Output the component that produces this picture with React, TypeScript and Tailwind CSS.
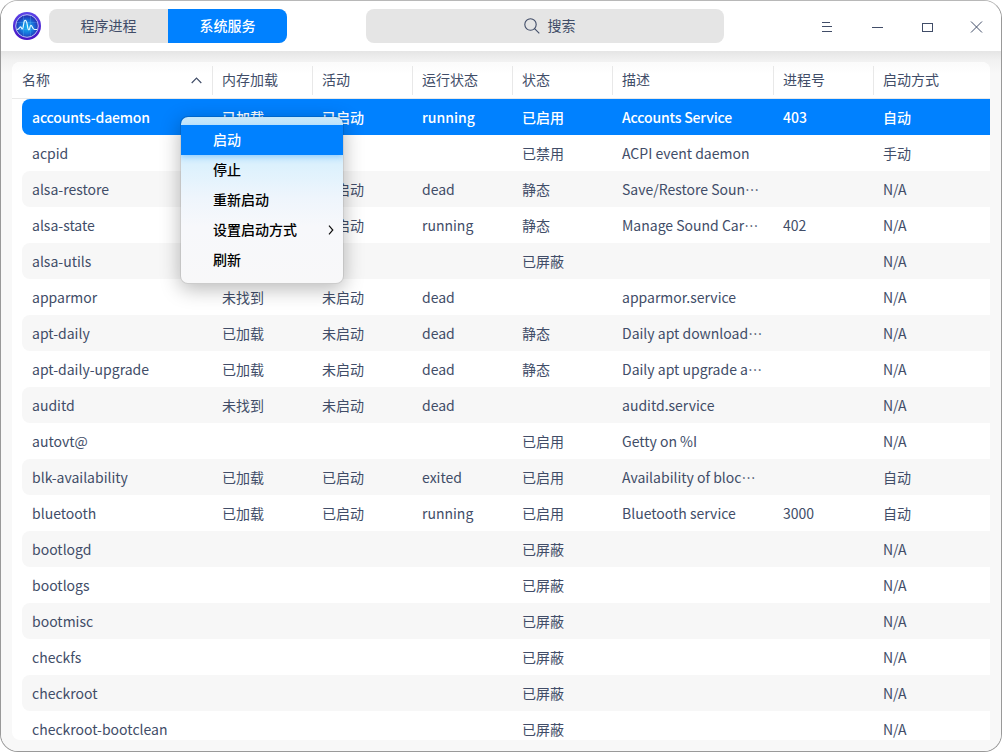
import React from "react";

type Service = {
  name: string;
  load?: string;
  active?: string;
  run?: string;
  state?: string;
  desc?: string;
  pid?: string;
  mode: string;
};

const services: Service[] = [
  { name: "accounts-daemon", load: "已加载", active: "已启动", run: "running", state: "已启用", desc: "Accounts Service", pid: "403", mode: "自动" },
  { name: "acpid", state: "已禁用", desc: "ACPI event daemon", mode: "手动" },
  { name: "alsa-restore", active: "未启动", run: "dead", state: "静态", desc: "Save/Restore Soun…", mode: "N/A" },
  { name: "alsa-state", active: "已启动", run: "running", state: "静态", desc: "Manage Sound Car…", pid: "402", mode: "N/A" },
  { name: "alsa-utils", state: "已屏蔽", mode: "N/A" },
  { name: "apparmor", load: "未找到", active: "未启动", run: "dead", desc: "apparmor.service", mode: "N/A" },
  { name: "apt-daily", load: "已加载", active: "未启动", run: "dead", state: "静态", desc: "Daily apt download…", mode: "N/A" },
  { name: "apt-daily-upgrade", load: "已加载", active: "未启动", run: "dead", state: "静态", desc: "Daily apt upgrade a…", mode: "N/A" },
  { name: "auditd", load: "未找到", active: "未启动", run: "dead", desc: "auditd.service", mode: "N/A" },
  { name: "autovt@", state: "已启用", desc: "Getty on %I", mode: "N/A" },
  { name: "blk-availability", load: "已加载", active: "已启动", run: "exited", state: "已启用", desc: "Availability of bloc…", mode: "自动" },
  { name: "bluetooth", load: "已加载", active: "已启动", run: "running", state: "已启用", desc: "Bluetooth service", pid: "3000", mode: "自动" },
  { name: "bootlogd", state: "已屏蔽", mode: "N/A" },
  { name: "bootlogs", state: "已屏蔽", mode: "N/A" },
  { name: "bootmisc", state: "已屏蔽", mode: "N/A" },
  { name: "checkfs", state: "已屏蔽", mode: "N/A" },
  { name: "checkroot", state: "已屏蔽", mode: "N/A" },
  { name: "checkroot-bootclean", state: "已屏蔽", mode: "N/A" },
];

const headers = ["内存加载", "活动", "运行状态", "状态", "描述", "进程号", "启动方式"];
const menuItems = ["启动", "停止", "重新启动", "设置启动方式", "刷新"];

function Logo() {
  return (
    <svg className="ml-[11px] size-[30px] shrink-0" viewBox="0 0 30 30" fill="none">
      <defs>
        <radialGradient id="disc" cx="0.5" cy="0.55" r="0.5">
          <stop offset="0" stopColor="#18b4ee" />
          <stop offset="0.55" stopColor="#1677dc" />
          <stop offset="1" stopColor="#2432b5" />
        </radialGradient>
        <linearGradient id="ring" x1="0" y1="0" x2="0" y2="1">
          <stop offset="0" stopColor="#5c43e8" />
          <stop offset="1" stopColor="#4614c4" />
        </linearGradient>
      </defs>
      <circle cx="15" cy="15" r="14" fill="url(#ring)" />
      <circle cx="15" cy="15" r="11.3" fill="url(#disc)" stroke="#c8cdfa" strokeWidth="0.9" />
      <path d="M4.5 11.5h21M4.5 18.5h21M11.5 4.5v21M18.5 4.500v21" stroke="#73c8ff" strokeOpacity="0.35" strokeWidth="0.7" />
      <path d="M5 18.500C7.500 18.500 7.500 15.800 8.600 15.800C9.700 15.800 9.300 18 10.200 18C11.800 18 11.200 9.300 13.200 9.300C15.800 9.300 15 18.800 16.800 18.800C18.200 18.800 17.600 14.300 19 14.300C20.400 14.300 20.300 18.500 22.500 18.500H25" stroke="#e4f8ff" strokeWidth="1.200" />
    </svg>
  );
}

function Titlebar() {
  return (
    <header className="flex h-[50px] shrink-0 items-center bg-white">
      <Logo />
      <div className="ml-[7px] flex h-[34px] w-[238px] shrink-0 overflow-hidden rounded-lg bg-[#e4e4e4]">
        <div className="flex w-[119px] items-center justify-center pb-[2px]">程序进程</div>
        <div className="flex w-[119px] items-center justify-center bg-[#0081ff] pb-[2px] font-medium text-white">系统服务</div>
      </div>
      <div className="ml-[79px] flex h-[34px] w-[358px] shrink-0 items-center justify-center rounded-lg bg-[#e5e5e5] pl-[9px]">
        <svg className="mr-2 size-4" viewBox="0 0 16 16" fill="none" stroke="#414d68" strokeWidth="1.1">
          <circle cx="6.500" cy="6.500" r="5.700" />
          <path d="M10.600 10.600L15.300 15.300" />
        </svg>
        <span className="pb-[2px]">搜索</span>
      </div>
      <svg className="ml-[78px] shrink-0" width="190" height="50" viewBox="0 0 190 50" fill="none" stroke="#414d68" strokeWidth="1" shapeRendering="crispEdges">
        <path d="M20 21.500h8M20 25.500h10M20 30.500h10" />
        <path d="M70 26.500h11" />
        <path d="M120.500 22.500h10v8h-10z" />
        <path d="M169 20.500l11 11M180 20.500l-11 11" shapeRendering="auto" />
      </svg>
    </header>
  );
}

const columns = "grid grid-cols-[190px_100px_100px_100px_100px_161px_100px_107px]";

function Row({ s, index }: { s: Service; index: number }) {
  const look =
    index === 0
      ? "bg-[#0081ff] font-medium tracking-[-0.17px] text-white"
      : index % 2 === 0
        ? "bg-[#f7f7f7]"
        : "bg-white";
  const cells = [s.name, s.load, s.active, s.run, s.state, s.desc, s.pid, s.mode];
  return (
    <div className={`${columns} ml-[10px] h-9 shrink-0 items-center rounded-l-lg pl-[10px] ${look}`}>
      {cells.map((c, i) => (
        <span key={i} className={i === 0 || i === 5 ? "whitespace-nowrap" : "whitespace-nowrap tracking-normal"}>{c}</span>
      ))}
    </div>
  );
}

function ContextMenu() {
  return (
    <div className="absolute left-[180px] top-[116px] flex h-[168px] w-[164px] flex-col overflow-hidden rounded-lg border border-black/20 bg-[linear-gradient(180deg,#c5e7fb_0%,#c9ebfd_20%,#dcf1fd_29%,#eef5fc_48%,#f7f8fb_66%,#f8f8f9_100%)] bg-clip-padding pt-2 font-medium text-black shadow-[0_5px_20px_rgba(0,0,0,0.28)]">
      {menuItems.map((m, i) => (
        <div
          key={m}
          className={`flex h-[30px] shrink-0 items-center justify-between pl-8 pr-[9px] ${i === 0 ? "bg-[#0081ff] text-white shadow-[0_2px_6px_rgba(0,129,255,0.3)]" : ""}`}
        >
          <span className="pb-[2px]">{m}</span>
          {i === 3 && (
            <svg width="6" height="10" viewBox="0 0 6 10" fill="none" stroke="#111" strokeWidth="1.200">
              <path d="M1 .6l3.800 4.400L1 9.400" />
            </svg>
          )}
        </div>
      ))}
    </div>
  );
}

export default function App() {
  return (
    <div lang="zh-CN" className="relative h-[752px] w-[1002px] overflow-hidden bg-white font-['Noto_Sans_CJK_SC',sans-serif] text-[14px] leading-5 text-[#414d68]">
      <div className="flex h-full flex-col overflow-hidden rounded-[18px] border border-[#999] border-t-[#b8b8b8] bg-[#f8f8f8]">
        <Titlebar />
        <main className="flex min-h-0 flex-1 flex-col bg-[linear-gradient(180deg,#e5e5e5_0px,#f2f2f2_10px,#f8f8f8_22px)] p-[11px]">
          <div className="flex min-h-0 flex-1 flex-col overflow-hidden rounded-tl-lg rounded-tr-lg rounded-bl-lg bg-white">
            <div className="grid h-[37px] shrink-0 grid-cols-[200px_100px_100px_100px_100px_161px_100px_117px] items-center border-b border-[#e8e8e8] bg-[linear-gradient(180deg,#fbfbfb,#ffffff_12px)]">
              <div className="flex items-center justify-between pl-[10px] pr-[10px]">
                <span className="pb-[2px]">名称</span>
                <svg width="11" height="7" viewBox="0 0 11 7" fill="none" stroke="#414d68" strokeWidth="1.200">
                  <path d="M.7 6L5.500 1.200L10.300 6" />
                </svg>
              </div>
              {headers.map((h) => (
                <div key={h} className="flex h-[29px] items-center border-l border-[#e8e8e8] pb-[2px] pl-[9px]">{h}</div>
              ))}
            </div>
            {services.map((s, i) => (
              <Row key={s.name} s={s} index={i} />
            ))}
          </div>
        </main>
      </div>
      <ContextMenu />
    </div>
  );
}
